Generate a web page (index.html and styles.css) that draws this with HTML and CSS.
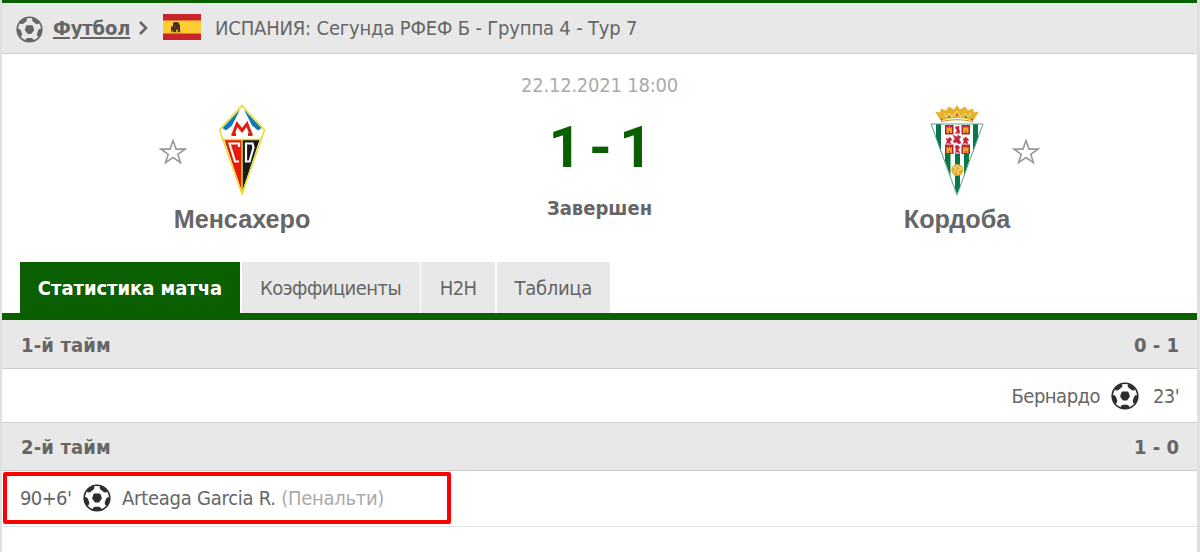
FILE: index.html
```html
<!DOCTYPE html>
<html lang="ru">
<head>
<meta charset="utf-8">
<title>Менсахеро - Кордоба</title>
<link rel="stylesheet" href="styles.css">
</head>
<body>
<svg class="defs" width="0" height="0" aria-hidden="true">
  <symbol id="ball" viewBox="0 0 28 28">
    <circle cx="14" cy="14" r="13.6" fill="currentColor"/>
    <circle class="ball-skin" cx="14" cy="14" r="11.900"/>
    <path fill="currentColor" d="M10.500 10.300q.2-.8 1-.8h5q.8 0 1 .8l1.300 3.700q.1.700-.4 1.200l-2 2.800q-.5.600-1.200.6h-2.400q-.7 0-1.200-.6l-2-2.800q-.5-.5-.4-1.200z"/>
    <g fill="currentColor">
      <path id="patch" d="M11.800 22.800h4.400l2 1.200v2.500H9.800V24z"/>
      <use href="#patch" transform="rotate(72 14 14)"/>
      <use href="#patch" transform="rotate(144 14 14)"/>
      <use href="#patch" transform="rotate(216 14 14)"/>
      <use href="#patch" transform="rotate(288 14 14)"/>
    </g>
  </symbol>
  <symbol id="star" viewBox="0 0 28 26">
    <path fill="none" stroke="currentColor" stroke-width="1.6" d="M14 2.600l3 8.500h9l-7.200 5.200 2.700 8.400-7.500-5.200-7.500 5.200 2.700-8.400L2 11.100h9z"/>
  </symbol>
</svg>
<main class="page">
  <header class="crumbs">
    <svg class="crumb-ball"><use href="#ball"/></svg>
    <a class="sport">Футбол</a>
    <svg class="chevron" viewBox="0 0 9 14"><path d="M1 1l6 6-6 6" fill="none" stroke="#666" stroke-width="2.600"/></svg>
    <svg class="flag" viewBox="0 0 38 26">
      <path fill="#c8252b" d="M0 0h38v26H0z"/><path fill="#fc3" d="M0 6.600h38v12.800H0z"/>
      <path fill="#b8992c" d="M8 17h10v1.500H8z"/>
      <path fill="#45301c" d="M10 9l2-1h2l2 1 1 3v6h-2v-2h-2v2h-3v-2l-2 2v-5l2-1z"/>
      <path fill="#8a3a22" d="M11 12h1.500v2H11zM14 14h1.500v2H14z"/>
    </svg>
    <span class="league">ИСПАНИЯ: Сегунда РФЕФ Б - Группа 4 - Тур 7</span>
  </header>

  <section class="match">
    <div class="team home">
      <svg class="star"><use href="#star"/></svg>
      <div class="club">
        <svg class="crest" viewBox="0 0 56 92">
          <path d="M28 1.500L50.500 26 28 90 5.500 26z" fill="#fff"/>
          <path d="M26 5.500L8.500 24l3.500 2.500 6-5zM30 5.500L47.500 24 44 26.500l-6-5z" fill="#1178b8"/>
          <path d="M10.500 36H28v52z" fill="#e61b0b"/><path d="M28 36h17.500L28 88z" fill="#17191b"/>
          <path d="M17.500 30.500H22M19 30.500l4-10.500 5 6.500 5-6.500 4 10.500M34 30.500h4.500" fill="none" stroke="#e61b0b" stroke-width="3"/>
          <path d="M25 43v-3.500h-9.500l5.500 18h4" fill="none" stroke="#fff" stroke-width="2.200"/>
          <path d="M32 39.500h6.500l1 4-4 14H32z" fill="none" stroke="#fff" stroke-width="2.200"/>
          <path d="M28 1.500L50.500 26 28 90 5.500 26zM9 35.500h38M28 36v52" fill="none" stroke="#ecd924" stroke-width="1.500"/>
        </svg>
        <h2 class="name">Менсахеро</h2>
      </div>
    </div>
    <div class="result">
      <time class="date">22.12.2021 18:00</time>
      <div class="score">1 - 1</div>
      <div class="status">Завершен</div>
    </div>
    <div class="team away">
      <div class="club">
        <svg class="crest" viewBox="0 0 56 92">
          <path d="M2 20h52L28 91z" fill="#fff"/>
          <path d="M7 20h5v28l-5-14zM44 20h5v14l-5 14zM16 48h5.500v24L16 57zM35 48h5v9l-5 15zM26 48h5v35l-3 7-2-6z" fill="#07774a"/>
          <path d="M16 20.500h24.500v29H16z" fill="#fff"/>
          <path d="M16 21h8.500v9.500H16zM32.500 21H41v9.500h-8.500zM16 40.500h8.500V50H16zM32.500 40.500H41V50h-8.500z" fill="#bd2034"/>
          <path d="M17.500 29v-6h1.500v1h1v-2h1v2h1v-1h1v6h-2v-2h-1v2zM34 29v-6h1.500v1h1v-2h1v2h1v-1h1v6h-2v-2h-1v2zM17.500 49v-6h1.500v1h1v-2h1v2h1v-1h1v6h-2v-2h-1v2zM34 49v-6h1.500v1h1v-2h1v2h1v-1h1v6h-2v-2h-1v2z" fill="#e9a82b"/>
          <path d="M26 23l4-1v4l1 1-1 3-2-1-2 1 2-3zM24 31l4 2 1-2 3 2-2 2 2 4-2 1-3-2-2 1-1-2 2-2zM17 34l2 1 2-2 2 3-2 1 1 3-3-1-2 1 1-3zM34 35l3-2 3 3-2 1 1 3-3-1-2 1 1-3zM26 42l3-1 2 3-2 1 2 4-3-1-2 1 1-3z" fill="#c5253b" stroke="#c5253b" stroke-width=".4"/>
          <path d="M2 20h52L28 91z" fill="none" stroke="#58a481" stroke-width="1"/>
          <circle cx="28.300" cy="66" r="6" fill="#e5ae24"/>
          <path d="M24 64l4-2 4 2M25 69l2-5M29 70v-4l4-1" fill="none" stroke="#fff" stroke-width=".7"/>
          <path d="M12 17L6 7.500l5 1 1-4 5 2 3-4 5 3 3-4.500 3 4.500 5-3 3 4 5-2 1 4 5-1-6 9.500c-9-4-23-4-32 0z" fill="#e6b12d"/>
          <path d="M15 9l2 4 3-4 3 4 5-6 4 6 4-4 3 4 3-4" fill="none" stroke="#fff0b8" stroke-width=".7"/>
          <path d="M12 18c9-3 23-3 32 0" fill="none" stroke="#c79220"/>
          <circle cx="28" cy="11" r="1" fill="#c43"/><circle cx="20" cy="13" r="1" fill="#239060"/><circle cx="37" cy="13" r="1" fill="#239060"/><circle cx="12.500" cy="15.500" r="1" fill="#c43"/><circle cx="43" cy="15.500" r="1" fill="#c43"/>
        </svg>
        <h2 class="name">Кордоба</h2>
      </div>
      <svg class="star"><use href="#star"/></svg>
    </div>
  </section>

  <nav class="tabs">
    <a class="tab active">Статистика матча</a>
    <a class="tab odds">Коэффициенты</a>
    <a class="tab h2h">H2H</a>
    <a class="tab table">Таблица</a>
  </nav>

  <section class="events">
    <div class="half"><span class="half-name">1-й тайм</span><span class="half-score">0 - 1</span></div>
    <div class="event right"><span class="scorer">Бернардо</span><svg class="goal"><use href="#ball"/></svg><span class="minute">23'</span></div>
    <div class="half second"><span class="half-name">2-й тайм</span><span class="half-score">1 - 0</span></div>
    <div class="event marked"><span class="minute late">90+6'</span><svg class="goal"><use href="#ball"/></svg><span class="player">Arteaga Garcia R. </span><span class="note">(Пенальти)</span><span class="marker"></span></div>
  </section>
</main>
</body>
</html>
```
FILE: styles.css
```css
* { box-sizing: border-box; }
body {
  margin: 0;
  height: 552px;
  overflow: hidden;
  background: #fff;
  color: #666;
  font: 20px/26px "DejaVu Sans Condensed", "DejaVu Sans", sans-serif;
  letter-spacing: -.62px;
}
svg { display: block; flex: none; }
.defs { position: absolute; }
.ball-skin { fill: var(--skin, #fff); }
.page {
  height: 552px;
  border: solid #e0e0e0;
  border-width: 0 3px 0 2px;
}
.crumbs {
  --skin: #e8e8e8;
  display: flex;
  align-items: center;
  height: 54px;
  padding: 0 0 1px 14px;
  background: #e8e8e8;
  border-top: 3px solid #0a5f00;
  border-bottom: 1px solid #ccc;
}
.crumb-ball { width: 27px; height: 27px; margin: 3px 10px 0 0; }
.sport { width: 77px; font-weight: bold; white-space: nowrap; text-decoration: underline; text-decoration-thickness: 2px; text-underline-offset: 2px; letter-spacing: -.15px; }
.chevron { width: 9px; height: 14px; margin: 1px 15px 0 9px; }
.flag { width: 38px; height: 26px; margin: -1px 14px 0 0; }
.league { white-space: nowrap; letter-spacing: -.18px; }
.match { display: flex; justify-content: space-between; height: 208px; padding: 18px 157px 0 157px; }
.team { display: flex; align-items: flex-start; padding-top: 32px; }
.team .star { width: 28px; height: 26px; margin-top: 34px; color: #999; }
.club { display: flex; flex-direction: column; align-items: center; width: 166px; }
.home .club { margin-left: -28px; }
.away .club { margin-right: -28px; }
.crest { width: 56px; height: 92px; }
.name { margin: 8px 0 0; font: bold 25.2px/30px "Liberation Sans", sans-serif; letter-spacing: 0; }
.result { display: flex; flex-direction: column; align-items: center; }
.date { color: #aaa; letter-spacing: -.22px; }
.score { margin-top: 16px; padding-left: 2px; color: #0a5f00; font: bold 58px/66px Roboto, sans-serif; letter-spacing: 0; word-spacing: -7px; }
.status { margin-top: 15px; font-weight: bold; letter-spacing: 0; }
.tabs { display: flex; gap: 1.6px; height: 58px; padding-left: 18px; border-bottom: 7px solid #0a5f00; }
.tab { display: flex; align-items: center; justify-content: center; height: 51px; padding-top: 1px; background: #e8e8e8; white-space: nowrap; }
.active { width: 220px; background: #0a5f00; color: #fff; font-weight: bold; letter-spacing: -.04px; }
.odds { width: 178px; letter-spacing: -.55px; }
.h2h { width: 74px; }
.table { width: 113px; letter-spacing: -.3px; }
.half { display: flex; align-items: center; justify-content: space-between; height: 49px; padding: 2px 18px 0 19px; background: #e8e8e8; border-bottom: 1px solid #ccc; font-weight: bold; letter-spacing: .13px; }
.second { padding-top: 0; border-top: 1px solid #ccc; }
.half-score { letter-spacing: 0; }
.event { position: relative; display: flex; align-items: center; height: 53px; padding: 0 18px; white-space: pre; }
.right { justify-content: flex-end; }
.goal { width: 28px; height: 28px; margin: 0 11px; color: #2d2d2d; }
.right .goal { margin-right: 14px; }
.scorer { letter-spacing: -.5px; }
.marked { height: 56px; padding-bottom: 1px; border-bottom: 1px solid #e5e5e5; }
.late { width: 52px; }
.player { letter-spacing: -.25px; }
.note { color: #aaa; letter-spacing: -.3px; }
.marker { position: absolute; left: 1px; top: 1px; width: 448px; height: 52px; border: 4px solid #fe0000; border-radius: 2px; }
```
